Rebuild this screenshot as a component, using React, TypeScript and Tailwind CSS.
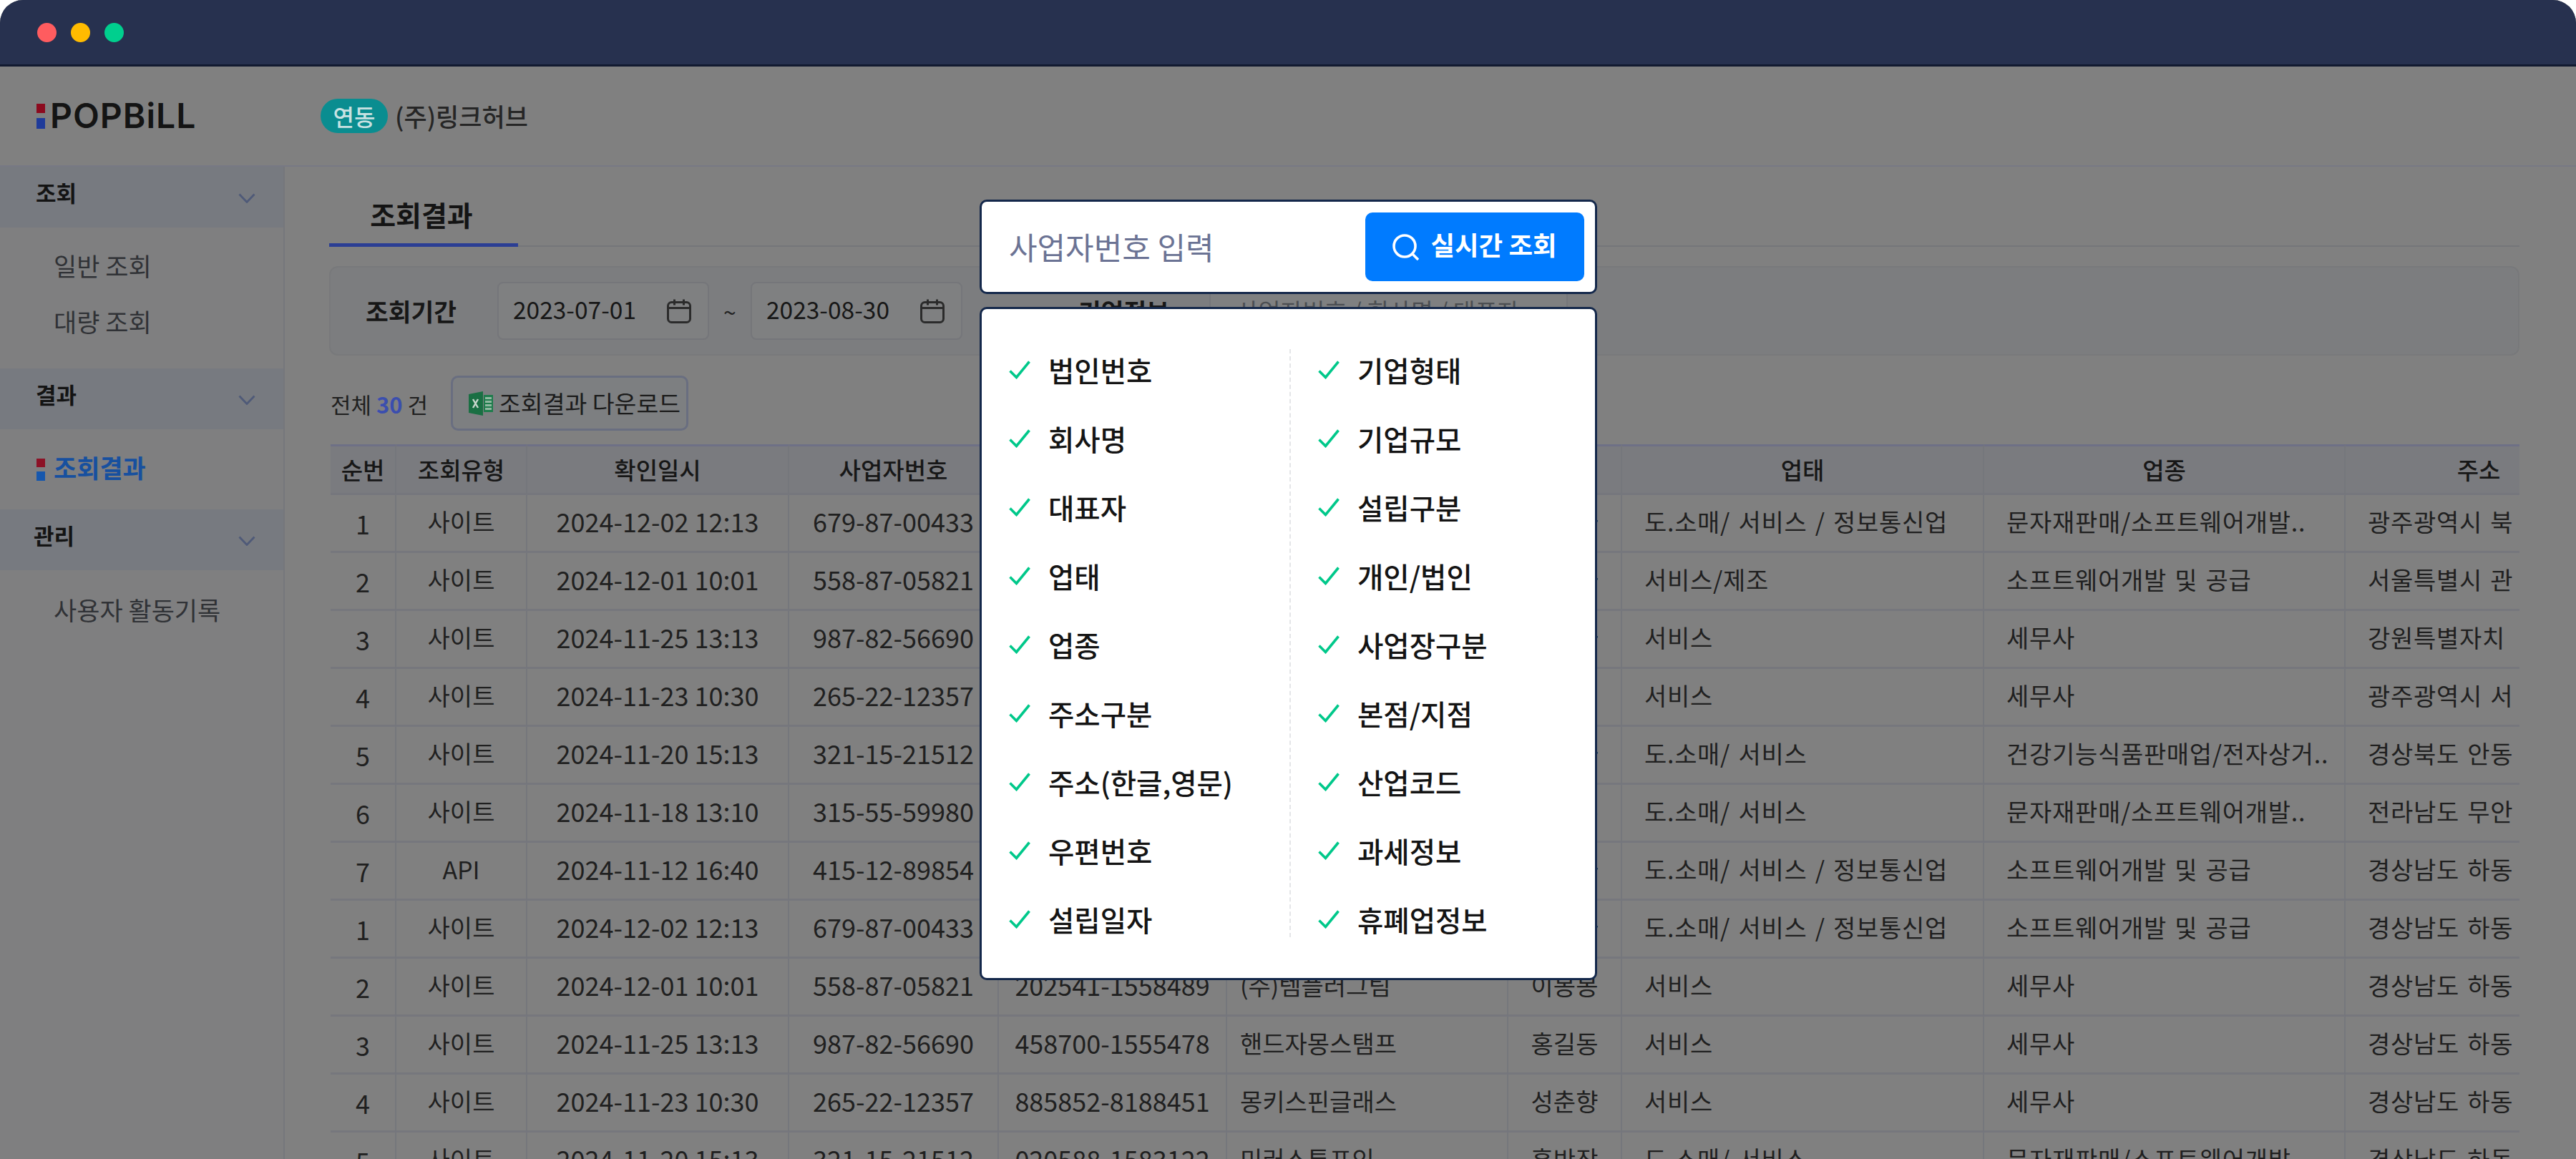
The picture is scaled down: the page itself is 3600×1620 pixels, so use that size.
const font = "font-['Noto_Sans_CJK_KR','Noto_Sans',sans-serif]";

type Row = {
  no: string;
  kind: string;
  date: string;
  biz: string;
  corp: string;
  company: string;
  ceo: string;
  status: string;
  sector: string;
  addr: string;
};

const DEV = "소프트웨어개발 및 공급";
const SMS = "문자재판매/소프트웨어개발..";
const ALL = "도.소매/ 서비스 / 정보통신업";
const SALE = "도.소매/ 서비스";

const rows: Row[] = [
  { no: "1", kind: "사이트", date: "2024-12-02 12:13", biz: "679-87-00433", corp: "110111-1234567", company: "(주)링크허브", ceo: "김민아", status: ALL, sector: SMS, addr: "광주광역시 북" },
  { no: "2", kind: "사이트", date: "2024-12-01 10:01", biz: "558-87-05821", corp: "202541-1558489", company: "(주)템플러그팀", ceo: "이민아", status: "서비스/제조", sector: DEV, addr: "서울특별시 관" },
  { no: "3", kind: "사이트", date: "2024-11-25 13:13", biz: "987-82-56690", corp: "458700-1555478", company: "핸드자몽스탬프", ceo: "박민아", status: "서비스", sector: "세무사", addr: "강원특별자치" },
  { no: "4", kind: "사이트", date: "2024-11-23 10:30", biz: "265-22-12357", corp: "885852-8188451", company: "몽키스핀글래스", ceo: "최민채", status: "서비스", sector: "세무사", addr: "광주광역시 서" },
  { no: "5", kind: "사이트", date: "2024-11-20 15:13", biz: "321-15-21512", corp: "020588-1583122", company: "미러스톤포인", ceo: "정민아", status: SALE, sector: "건강기능식품판매업/전자상거..", addr: "경상북도 안동" },
  { no: "6", kind: "사이트", date: "2024-11-18 13:10", biz: "315-55-59980", corp: "110111-7654321", company: "한빛상사", ceo: "김민수", status: SALE, sector: SMS, addr: "전라남도 무안" },
  { no: "7", kind: "API", date: "2024-11-12 16:40", biz: "415-12-89854", corp: "110111-2345678", company: "(주)링크허브", ceo: "강민아", status: ALL, sector: DEV, addr: "경상남도 하동" },
  { no: "1", kind: "사이트", date: "2024-12-02 12:13", biz: "679-87-00433", corp: "110111-1234567", company: "(주)링크허브", ceo: "윤민아", status: ALL, sector: DEV, addr: "경상남도 하동" },
  { no: "2", kind: "사이트", date: "2024-12-01 10:01", biz: "558-87-05821", corp: "202541-1558489", company: "(주)템플러그팀", ceo: "이봉봉", status: "서비스", sector: "세무사", addr: "경상남도 하동" },
  { no: "3", kind: "사이트", date: "2024-11-25 13:13", biz: "987-82-56690", corp: "458700-1555478", company: "핸드자몽스탬프", ceo: "홍길동", status: "서비스", sector: "세무사", addr: "경상남도 하동" },
  { no: "4", kind: "사이트", date: "2024-11-23 10:30", biz: "265-22-12357", corp: "885852-8188451", company: "몽키스핀글래스", ceo: "성춘향", status: "서비스", sector: "세무사", addr: "경상남도 하동" },
  { no: "5", kind: "사이트", date: "2024-11-20 15:13", biz: "321-15-21512", corp: "020588-1583122", company: "미러스톤포인", ceo: "홍반장", status: SALE, sector: SMS, addr: "경상남도 하동" },
];

const columns = ["순번", "조회유형", "확인일시", "사업자번호", "법인번호", "회사명", "대표자", "업태", "업종", "주소"];

const leftFields = ["법인번호", "회사명", "대표자", "업태", "업종", "주소구분", "주소(한글,영문)", "우편번호", "설립일자"];
const rightFields = ["기업형태", "기업규모", "설립구분", "개인/법인", "사업장구분", "본점/지점", "산업코드", "과세정보", "휴폐업정보"];

function Chevron() {
  return (
    <svg width="24" height="14" viewBox="0 0 24 14" fill="none" stroke="#4f5a78" strokeWidth="2.8" className="mt-[2px]">
      <path d="M1.5 1.5 12 12.5 22.5 1.5" />
    </svg>
  );
}

function CalendarIcon() {
  return (
    <svg width="34" height="34" viewBox="0 0 34 34" fill="none" stroke="#2b2b2b" strokeWidth="3">
      <rect x="1.5" y="4.5" width="31" height="28" rx="5" />
      <path d="M1.5 12.5h31M10.5 0.5v8M23.5 0.5v8" />
    </svg>
  );
}

function ExcelIcon() {
  return (
    <svg width="34" height="34" viewBox="0 0 34 34">
      <path d="M20 0 0 4v26l20 4z" fill="#1a6f43" />
      <path d="M21 5h13v24H21z" fill="#1f7c4c" />
      <path d="M23 8h9v3h-9zM23 13h9v3h-9zM23 18h9v3h-9zM23 23h9v3h-9z" fill="#8fb9a0" />
      <path d="M6 11l7 12M13 11 6 23" stroke="#c9d6cd" strokeWidth="2.4" fill="none" />
    </svg>
  );
}

function MarkSquares({ red, blue }: { red: string; blue: string }) {
  return (
    <span className="flex flex-col justify-between w-[12px] h-[31px] shrink-0">
      <span className={`block w-[12px] h-[12px] ${red}`} />
      <span className={`block w-[12px] h-[13px] ${blue}`} />
    </span>
  );
}

function SideHead({ label, className = "" }: { label: string; className?: string }) {
  return (
    <div className={`flex items-center justify-between h-[85px] pl-[50px] pr-[39px] bg-[#777a80] ${className}`}>
      <span className="text-[31px] font-semibold text-[#141414] -mt-[15px] leading-none">{label}</span>
      <Chevron />
    </div>
  );
}

function Sidebar() {
  return (
    <aside className="w-[398px] shrink-0 border-r-2 border-[#76777c] bg-[#7f7f80]">
      <SideHead label="조회" />
      <div className="flex flex-col gap-[43px] pl-[75px] pt-[35px] pb-[48px] text-[35px] leading-[35px] text-[#303236]">
        <span>일반 조회</span>
        <span>대량 조회</span>
      </div>
      <SideHead label="결과" className="mt-[1px]" />
      <div className="flex items-center gap-[12px] pl-[51px] h-[112px] text-[35px] font-semibold text-[#17509f]">
        <MarkSquares red="bg-[#8c1226]" blue="bg-[#1657ad]" />
        <span className="-mt-[5px]">조회결과</span>
      </div>
      <SideHead label="관리" className="[&>span]:-ml-[3px]" />
      <div className="pl-[75px] pt-[37px] text-[35px] leading-[35px] text-[#303236]">사용자 활동기록</div>
    </aside>
  );
}

function DateBox({ value }: { value: string }) {
  return (
    <div className="flex items-center justify-between w-[296px] h-[81px] pl-[20px] pr-[23px] rounded-[8px] border-2 border-[#75767a] bg-[#7f8081]">
      <span className="text-[33.5px] text-[#171717] -mt-[5px]">{value}</span>
      <CalendarIcon />
    </div>
  );
}

function Filter() {
  return (
    <div className="flex items-center h-[125px] mt-[27px] pl-[49px] rounded-[12px] border-2 border-[#78797b] bg-[#7c7d7f]">
      <span className="w-[184px] text-[34.5px] font-semibold text-[#171717]">조회기간</span>
      <DateBox value="2023-07-01" />
      <span className="w-[58px] text-center text-[32px] text-[#222]">~</span>
      <DateBox value="2023-08-30" />
      <span className="ml-[162px] w-[183px] text-[34.5px] font-semibold text-[#171717]">기업정보</span>
      <div className="flex items-center w-[501px] h-[81px] pl-[36px] rounded-[8px] border-2 border-[#75767a] bg-[#7f8081] text-[33.5px] text-[#4b4e52]">
        사업자번호 / 회사명 / 대표자
      </div>
    </div>
  );
}

function ResultsTable() {
  const cellBase = "h-[81px] border-b-[3px] border-r-2 border-b-[#76777d] border-r-[#75777c] p-0 whitespace-nowrap";
  const wide = "tracking-[0.7px] [word-spacing:3px]";
  return (
    <div className="ml-[2px] mt-[19px] overflow-hidden">
      <table className="table-fixed w-[3190px] border-separate border-spacing-0 text-[#202020]">
        <colgroup>
          <col className="w-[92px]" />
          <col className="w-[183px]" />
          <col className="w-[366px]" />
          <col className="w-[293px]" />
          <col className="w-[319px]" />
          <col className="w-[393px]" />
          <col className="w-[159px]" />
          <col className="w-[506px]" />
          <col className="w-[505px]" />
          <col className="w-[374px]" />
        </colgroup>
        <thead>
          <tr>
            {columns.map((c) => (
              <th
                key={c}
                className="h-[71px] p-0 bg-[#7a7b7f] border-t-[3px] border-t-[#6e7086] border-b-[3px] border-b-[#76777d] border-r-2 border-r-[#75777c] text-[33px] font-medium text-[#171717]"
              >
                {c}
              </th>
            ))}
          </tr>
        </thead>
        <tbody>
          {rows.map((r, i) => (
            <tr key={i}>
              <td className={`${cellBase} text-center text-[36px]`}>{r.no}</td>
              <td className={`${cellBase} text-center text-[34px]`}><span className="relative -top-[3px]">{r.kind}</span></td>
              <td className={`${cellBase} text-center text-[36px]`}><span className="relative -top-[3px]">{r.date}</span></td>
              <td className={`${cellBase} text-center text-[36px]`}><span className="relative -top-[3px]">{r.biz}</span></td>
              <td className={`${cellBase} text-center text-[36px]`}><span className="relative -top-[3px]">{r.corp}</span></td>
              <td className={`${cellBase} pl-[18px] text-[34px]`}><span className="relative -top-[3px]">{r.company}</span></td>
              <td className={`${cellBase} text-center text-[34px]`}><span className="relative -top-[3px]">{r.ceo}</span></td>
              <td className={`${cellBase} pl-[31px] text-[34px] ${wide}`}><span className="relative -top-[3px]">{r.status}</span></td>
              <td className={`${cellBase} pl-[31px] text-[34px] ${wide}`}><span className="relative -top-[3px]">{r.sector}</span></td>
              <td className={`${cellBase} pl-[31px] text-[34px] ${wide}`}><span className="relative -top-[3px]">{r.addr}</span></td>
            </tr>
          ))}
        </tbody>
      </table>
    </div>
  );
}

function Main() {
  return (
    <main className="flex-1 min-w-0 pl-[62px] pr-[79px]">
      <div className="flex h-[112px] items-end border-b-2 border-[#75767a]">
        <div className="flex justify-center w-[264px] h-[87px] -mb-[2px] border-b-[5px] border-[#2b3e94]">
          <span className="-ml-[6px] text-[39px] font-semibold text-[#141414] leading-[56px] pt-[13px]">조회결과</span>
        </div>
      </div>
      <Filter />
      <div className="flex items-center mt-[28px] h-[77px] pl-[2px]">
        <span className="w-[168px] pt-[3px] text-[31px] text-[#1f1f1f] whitespace-nowrap">
          전체 <b className="font-semibold text-[#3b4eae]">30</b> 건
        </span>
        <button className="flex items-center gap-[8px] w-[332px] h-[77px] pl-[22px] rounded-[10px] border-[3px] border-[#696e80] bg-[#7d7f81] text-[33.5px] text-[#1b1b1b]">
          <ExcelIcon />
          <span className="whitespace-nowrap">조회결과 다운로드</span>
        </button>
      </div>
      <ResultsTable />
    </main>
  );
}

function FieldList({ items, className = "" }: { items: string[]; className?: string }) {
  return (
    <ul className={`flex flex-col gap-[56px] ${className}`}>
      {items.map((item) => (
        <li key={item} className="flex items-center h-[40px] gap-[25px] text-[39.5px] leading-none font-medium text-[#141414] whitespace-nowrap">
          <svg width="30" height="26" viewBox="0 0 30 26" fill="none" stroke="#00c88a" strokeWidth="3.6" className="shrink-0">
            <path d="M1.5 14.5 10.5 23.5 28.5 1.5" />
          </svg>
          <span className="-mt-[1px]">{item}</span>
        </li>
      ))}
    </ul>
  );
}

function Modal() {
  return (
    <div className="absolute left-[1369px] top-[279px] w-[863px] flex flex-col gap-[18px]">
      <div className="flex items-center justify-between h-[132px] pl-[38px] pr-[15px] bg-white rounded-[10px] border-[3px] border-[#14284b]">
        <span className="text-[43px] text-[#6b7394] -mt-[2px]">사업자번호 입력</span>
        <button className="flex items-center justify-center gap-[16px] w-[306px] h-[96px] rounded-[10px] bg-[#007bff] text-[36.5px] font-bold text-white">
          <svg width="37" height="37" viewBox="0 0 37 37" fill="none" stroke="white" strokeWidth="3.6">
            <circle cx="17" cy="17" r="15" />
            <path d="M28 28l8 8" />
          </svg>
          <span className="-mt-[6px]">실시간 조회</span>
        </button>
      </div>
      <div className="relative flex h-[941px] pt-[65px] pl-[38px] bg-white rounded-[10px] border-[3px] border-[#14284b]">
        <FieldList items={leftFields} className="w-[432px]" />
        <FieldList items={rightFields} />
        <span className="absolute left-[430px] top-[56px] h-[822px] border-l-2 border-dashed border-[#e4e5e8]" />
      </div>
    </div>
  );
}

export default function App() {
  return (
    <div className={`w-[3600px] h-[1620px] overflow-hidden bg-white ${font}`}>
      <div className="relative h-full rounded-t-[32px] overflow-hidden bg-[#808080]">
        <div className="flex items-center gap-[20px] h-[93px] pl-[52px] bg-[#27314f] border-b-[3px] border-[#121a30]">
          <span className="w-[27px] h-[27px] rounded-full bg-[#ff5c5f]" />
          <span className="w-[27px] h-[27px] rounded-full bg-[#ffbb00]" />
          <span className="w-[27px] h-[27px] rounded-full bg-[#00cf8e]" />
        </div>
        <header className="flex items-center h-[140px] border-b-2 border-[#777984]">
          <div className="flex items-center w-[397px] pl-[51px]">
            <span className="flex flex-col justify-between w-[12px] h-[35px] mr-[7px]">
              <span className="block h-[13px] bg-[#8c0a1e]" />
              <span className="block h-[15px] bg-[#1f3b9a]" />
            </span>
            <span className="font-['Inter',sans-serif] text-[48px] leading-[48px] tracking-[1px] font-semibold text-[#141414]">POPBiLL</span>
          </div>
          <span className="flex items-center justify-center w-[94px] h-[48px] ml-[51px] rounded-full bg-[#0a8d90] text-[32px] font-medium text-[#c8e2e2]">
            연동
          </span>
          <span className="ml-[10px] text-[35px] font-medium text-[#262626]">(주)링크허브</span>
        </header>
        <div className="flex h-[1387px]">
          <Sidebar />
          <Main />
        </div>
        <Modal />
      </div>
    </div>
  );
}
